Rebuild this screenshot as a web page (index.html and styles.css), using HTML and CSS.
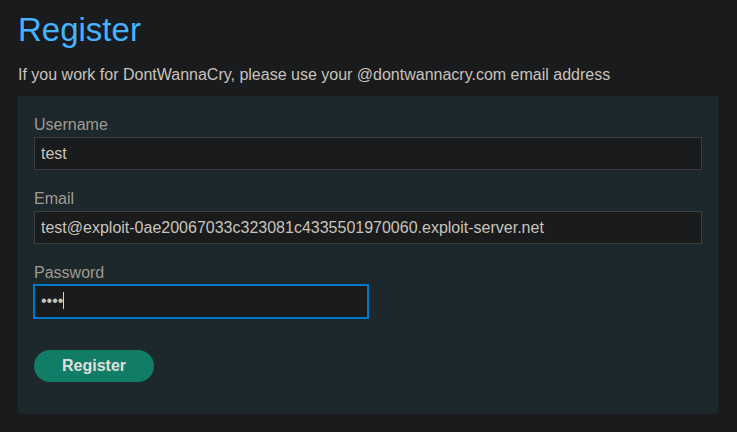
FILE: index.html
```
<!DOCTYPE html>
<html lang="en">
<head>
<meta charset="utf-8">
<title>Register</title>
<link rel="stylesheet" href="styles.css">
</head>
<body>
<main class="page">
  <h1 class="title">Register</h1>
  <p class="notice">If you work for DontWannaCry, please use your @dontwannacry.com email address</p>
  <form class="register-form">
    <div class="field">
      <label for="username">Username</label>
      <input id="username" type="text" value="test">
    </div>
    <div class="field">
      <label for="email">Email</label>
      <input id="email" type="email" value="test@exploit-0ae20067033c323081c4335501970060.exploit-server.net">
    </div>
    <div class="field">
      <label for="password">Password</label>
      <div class="password-box">
        <input id="password" class="password" type="password" value="test">
        <span class="caret"></span>
      </div>
    </div>
    <button class="submit" type="submit">Register</button>
  </form>
</main>
</body>
</html>
```
FILE: styles.css
```
* {
  box-sizing: border-box;
}

body {
  margin: 0;
  background: #1a1b1d;
  color: #c8c3bc;
  font: 16px/20px "Liberation Sans", Arial, sans-serif;
}

.page {
  padding: 10px 19px 18px 18px;
}

.title {
  margin: 0;
  color: #45b3ff;
  font-size: 33px;
  font-weight: 400;
  line-height: 40px;
}

.notice {
  margin: 15px 0 11px;
}

.register-form {
  display: flex;
  flex-direction: column;
  gap: 18px;
  padding: 18px 16px 32px;
  background: #1d282c;
}

.field label {
  display: block;
  height: 23px;
  line-height: 22px;
  color: #a09a90;
}

.field input {
  display: block;
  width: 100%;
  height: 33px;
  padding: 0 6px;
  border: 1px solid #3b3f41;
  border-radius: 0;
  outline: none;
  background: #1a1b1d;
  color: #c8c3bc;
  font: inherit;
}

.password-box {
  position: relative;
  width: 50%;
}

.field .password {
  padding-bottom: 2px;
  outline: 2px solid #0078cc;
  outline-offset: -1px;
}

.caret {
  position: absolute;
  top: 7px;
  left: 29px;
  width: 1px;
  height: 17px;
  background: #d8d4cf;
}

.submit {
  align-self: flex-start;
  height: 32px;
  margin-top: 14px;
  padding: 0 28px;
  border: 0;
  border-radius: 16px;
  background: #127d66;
  color: #e0dfdb;
  font: inherit;
  font-weight: 700;
}
```
